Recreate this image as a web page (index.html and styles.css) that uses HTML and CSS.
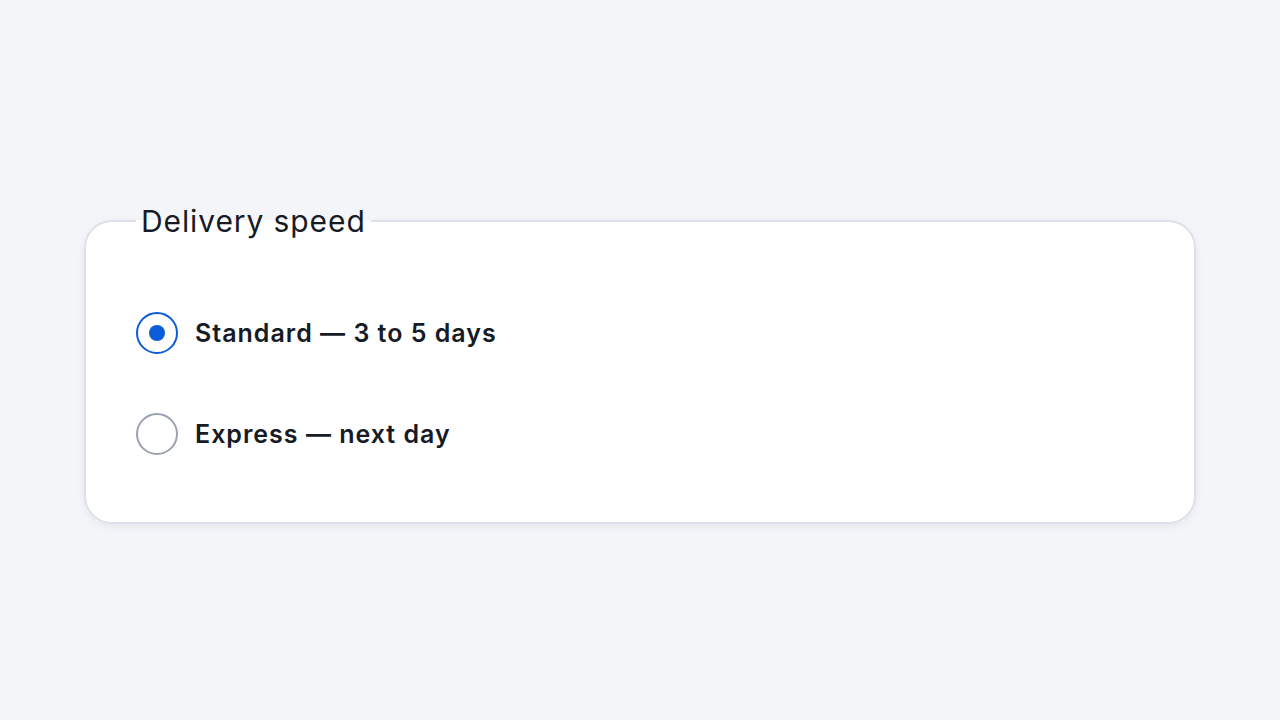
FILE: index.html
```html
<!DOCTYPE html>
<html lang="en">
<head>
    <meta charset="UTF-8">
    <meta name="viewport" content="width=device-width, initial-scale=1.0">
    <title>Delivery speed</title>
    <link rel="stylesheet" href="styles.css">
</head>
<body>
    <form class="page">
        <fieldset class="speed-group">
            <legend>Delivery speed</legend>
            <label class="option">
                <input type="radio" name="speed" value="standard" checked>
                <span class="dot"></span>
                <span class="option-text">Standard — 3 to 5 days</span>
            </label>
            <label class="option">
                <input type="radio" name="speed" value="express">
                <span class="dot"></span>
                <span class="option-text">Express — next day</span>
            </label>
        </fieldset>
    </form>
</body>
</html>
```

FILE: styles.css
```css
body {
    margin: 0;
    background-color: #f4f5f9;
    font-family: Inter, Arial, sans-serif;
    color: #161b26;
}
.page {
    height: 720px;
    display: flex;
    align-items: center;
    justify-content: center;
}
.speed-group {
    box-sizing: border-box;
    width: 1112px;
    margin: 0;
    margin-top: 6px;
    padding: 73px 50px 67px 50px;
    border: 2px solid #dde0e8;
    border-radius: 28px;
    background-color: #fff;
    box-shadow: 0 3px 8px rgba(30, 40, 70, 0.06);
    display: flex;
    flex-direction: column;
    gap: 59px;
}
legend {
    padding: 0 5px;
    font-size: 30px;
    line-height: 36px;
    font-weight: 400;
    letter-spacing: 0.9px;
}
.option {
    display: flex;
    align-items: center;
    gap: 17px;
    cursor: pointer;
}
.option input {
    display: none;
}
.dot {
    box-sizing: border-box;
    width: 42px;
    height: 42px;
    border: 2px solid #9aa1b0;
    border-radius: 50%;
    display: flex;
    align-items: center;
    justify-content: center;
}
.option input:checked + .dot {
    border-color: #0b5cd8;
}
.option input:checked + .dot::after {
    content: "";
    width: 16px;
    height: 16px;
    border-radius: 50%;
    background-color: #0b5cd8;
}
.option-text {
    font-size: 25px;
    font-weight: 600;
    line-height: 42px;
    letter-spacing: 1px;
}
```
